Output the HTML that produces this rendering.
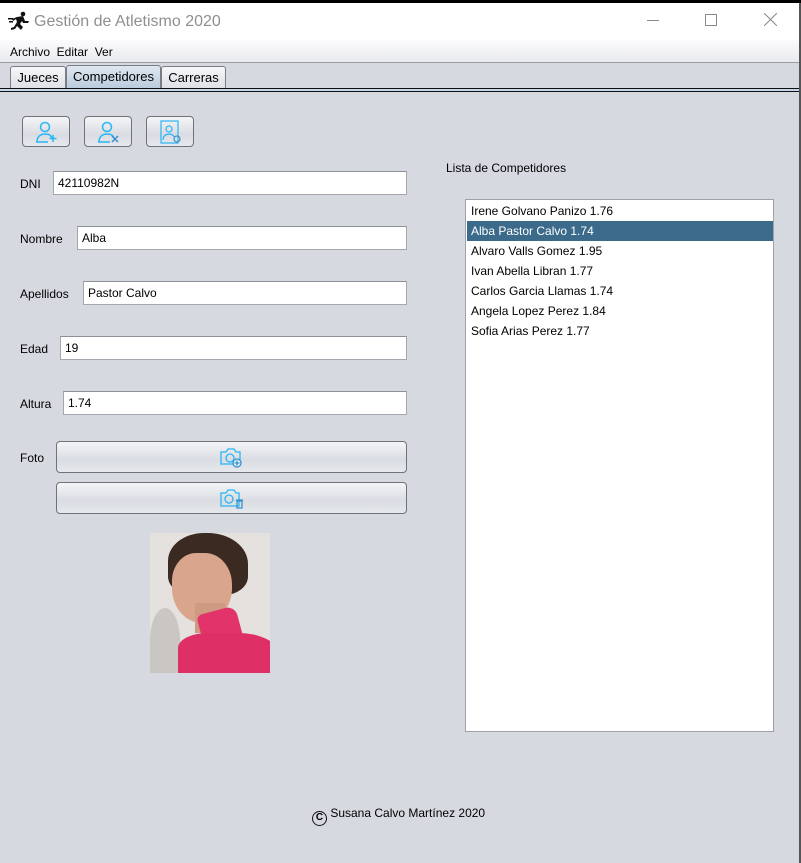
<!DOCTYPE html>
<html><head><meta charset="utf-8"><style>
*{margin:0;padding:0;box-sizing:border-box}
body{width:801px;height:863px;overflow:hidden;background:#000;font-family:"Liberation Sans",Arial,sans-serif;font-size:12px;color:#000;position:relative}
.a{position:absolute}
#win{left:0;top:3px;width:799px;height:860px;background:#d6d9e0}
#title{left:0;top:0;width:799px;height:37px;background:#fff}
#menu{left:0;top:37px;width:799px;height:23px;background:linear-gradient(#fbfbfc,#e9eaee);border-bottom:1px solid #9a9ca2}
.tab{top:63px;height:23px;border:1px solid #7a7d84;border-bottom:none;border-radius:3px 3px 0 0;background:linear-gradient(#f6f7f9,#dcdfe5);font-size:13px;text-align:center;line-height:22px}
.tf{height:24px;background:#fff;border:1px solid #a4a7ad;border-top-color:#8d9096;padding-left:4px;line-height:23px;font-size:12px}
.lb{font-size:12px}
.btn{border:1px solid #6f7278;border-radius:4px;background:linear-gradient(#f4f5f7,#d9dce2 60%,#e6e8ec)}
.li{left:1px;width:306px;height:20px;line-height:20px;padding-left:4px;font-size:12px}
</style></head><body>
<div id="win" class="a">
<div id="title" class="a">
<svg class="a" style="left:8px;top:8px" width="22" height="20" viewBox="0 0 22 20"><g fill="#111"><circle cx="15" cy="3" r="2.3"/><path d="M9 6l6-1 2 5 4 0-1 2-5 0-1-2-2 3 3 3-2 3-4-4-2 3-4 1 0-2 3-1 3-5-1-3-3 2-1-2z"/><rect x="0" y="7" width="5" height="1.5"/><rect x="1" y="10" width="4" height="1.5"/></g></svg>
<div class="a" style="left:34px;top:10px;font-size:16px;color:#8f8f8f">Gestión de Atletismo 2020</div>
<div class="a" style="left:647px;top:17px;width:12px;height:1px;background:#888"></div>
<div class="a" style="left:705px;top:11px;width:12px;height:12px;border:1px solid #888"></div>
<svg class="a" style="left:764px;top:10px" width="13" height="13"><path d="M0 0L13 13M13 0L0 13" stroke="#888" stroke-width="1"/></svg>
</div>
<div id="menu" class="a"><span class="a" style="left:10px;top:5px;font-size:12px">Archivo&nbsp; Editar&nbsp; Ver</span></div>
<div class="tab a" style="left:10px;width:56px">Jueces</div>
<div class="tab a" style="left:66px;width:95px;top:62px;height:24px;background:linear-gradient(#dfe7f0,#b9cbdc)">Competidores</div>
<div class="tab a" style="left:161px;width:65px">Carreras</div>
<div class="a" style="left:0;top:85px;width:799px;height:4px;border-top:1px solid #111;border-bottom:1px solid #111;background:#c5d6e8"></div>

<div class="btn a" style="left:22px;top:113px;width:48px;height:31px"><svg class="a" style="left:12px;top:4px" width="24" height="22" viewBox="0 0 24 22" fill="none" stroke="#29b6f6" stroke-width="1.5"><circle cx="10" cy="6" r="4.5"/><path d="M2 21c0-5 3-8 8-8s6 2 7 4M1 21h12"/><path d="M18 14v7M14.5 17.5h7"/></svg></div>
<div class="btn a" style="left:84px;top:113px;width:48px;height:31px"><svg class="a" style="left:12px;top:4px" width="24" height="22" viewBox="0 0 24 22" fill="none" stroke="#29b6f6" stroke-width="1.5"><circle cx="10" cy="6" r="4.5"/><path d="M2 21c0-5 3-8 8-8s6 2 7 4M1 21h12"/><path d="M15 15l6 6M21 15l-6 6" stroke="#3b8fd0"/></svg></div>
<div class="btn a" style="left:146px;top:113px;width:48px;height:31px"><svg class="a" style="left:13px;top:3px" width="22" height="25" viewBox="0 0 22 25" fill="none" stroke="#29b6f6" stroke-width="1.2"><rect x="1" y="1" width="17" height="22"/><circle cx="9" cy="9" r="3"/><path d="M3 20c0-4 3-6 6-6s5 2 5 3"/><circle cx="17" cy="19" r="3" stroke="#3b8fd0"/></svg></div>

<div class="lb a" style="left:20px;top:174px">DNI</div><div class="tf a" style="left:53px;top:168px;width:354px">42110982N</div>
<div class="lb a" style="left:20px;top:229px">Nombre</div><div class="tf a" style="left:77px;top:223px;width:330px">Alba</div>
<div class="lb a" style="left:20px;top:284px">Apellidos</div><div class="tf a" style="left:83px;top:278px;width:324px">Pastor Calvo</div>
<div class="lb a" style="left:20px;top:339px">Edad</div><div class="tf a" style="left:60px;top:333px;width:347px">19</div>
<div class="lb a" style="left:20px;top:394px">Altura</div><div class="tf a" style="left:63px;top:388px;width:344px">1.74</div>
<div class="lb a" style="left:20px;top:448px">Foto</div>
<div class="btn a" style="left:56px;top:438px;width:351px;height:32px"><svg class="a" style="left:163px;top:5px" width="24" height="22" viewBox="0 0 24 22" fill="none" stroke="#29b6f6" stroke-width="1.3"><path d="M1 5h5l2-3h6l2 3h4v12H1z"/><circle cx="10" cy="11" r="4"/><circle cx="17" cy="16" r="4" fill="#e0f4fd" stroke="#3b8fd0"/><path d="M17 13.5v5M14.5 16h5" stroke="#3b8fd0"/></svg></div>
<div class="btn a" style="left:56px;top:479px;width:351px;height:32px"><svg class="a" style="left:163px;top:5px" width="24" height="22" viewBox="0 0 24 22" fill="none" stroke="#29b6f6" stroke-width="1.3"><path d="M1 5h5l2-3h6l2 3h3v13H1z"/><circle cx="9" cy="11" r="4"/><path d="M16 12h7M17 13h5v7h-5z" stroke="#3b8fd0"/></svg></div>

<div class="a" style="left:150px;top:530px;width:120px;height:140px;background:#e4e1de;overflow:hidden">
<div class="a" style="left:0;top:75px;width:30px;height:65px;background:#c9c6c3;border-radius:50% 50% 0 0"></div>
<div class="a" style="left:18px;top:0;width:80px;height:62px;background:#3b2a22;border-radius:45% 50% 30% 30%"></div>
<div class="a" style="left:22px;top:20px;width:60px;height:70px;background:#d9a58c;border-radius:40% 45% 50% 50%"></div>
<div class="a" style="left:45px;top:70px;width:30px;height:30px;background:#cf9a82"></div>
<div class="a" style="left:50px;top:77px;width:40px;height:35px;background:#e2336a;border-radius:6px 10px 0 0;transform:rotate(-15deg)"></div>
<div class="a" style="left:28px;top:100px;width:100px;height:50px;background:#de2f66;border-radius:30% 40% 0 0"></div>
</div>

<div class="lb a" style="left:446px;top:158px">Lista de Competidores</div>
<div class="a" style="left:465px;top:196px;width:309px;height:533px;background:#fff;border:1px solid #9ea1a7">
<div class="li a" style="top:1px">Irene Golvano Panizo 1.76</div>
<div class="li a" style="top:21px;background:#3b6a8b;color:#fff">Alba Pastor Calvo 1.74</div>
<div class="li a" style="top:41px">Alvaro Valls Gomez 1.95</div>
<div class="li a" style="top:61px">Ivan Abella Libran 1.77</div>
<div class="li a" style="top:81px">Carlos Garcia Llamas 1.74</div>
<div class="li a" style="top:101px">Angela Lopez Perez 1.84</div>
<div class="li a" style="top:121px">Sofia Arias Perez 1.77</div>
</div>

<div class="a" style="left:312px;top:803px;font-size:12px;line-height:14px"><span style="display:inline-block;width:15px;height:15px;border:1.5px solid #111;border-radius:50%;font-size:10px;line-height:12px;text-align:center;font-weight:bold;vertical-align:-3px">C</span> Susana Calvo Martínez 2020</div>
</div>
<div class="a" style="left:799px;top:3px;width:2px;height:860px;background:#555"></div>
</body></html>
